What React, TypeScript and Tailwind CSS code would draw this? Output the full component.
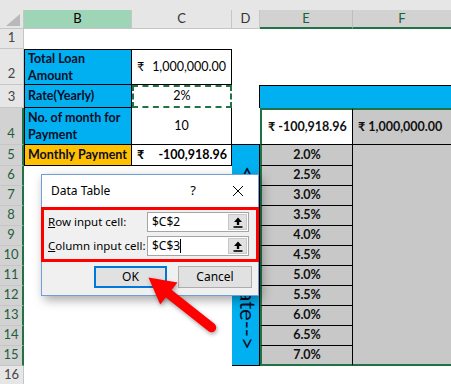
import React from "react";

const rates = ["2.0%", "2.5%", "3.0%", "3.5%", "4.0%", "4.5%", "5.0%", "5.5%", "6.0%", "6.5%", "7.0%"];

function RowHead({ n, selected }: { n: number; selected?: boolean }) {
  return (
    <div
      className={
        selected
          ? "flex items-end justify-center pb-px text-[13px] border-b border-[#c6c6c6] border-r-2 border-r-[#217346] bg-[#d2d2d2] text-[#1e5e3b]"
          : "flex items-end justify-center pb-px text-[13px] border-b border-[#c6c6c6] border-r border-r-[#c6c6c6] bg-[#e6e6e6] text-[#444]"
      }
    >
      {n}
    </div>
  );
}

function UploadIcon() {
  return (
    <svg width="10" height="11" viewBox="0 0 10 11">
      <path d="M5 0.5 L9 5 L6.2 5 L6.2 8 L3.8 8 L3.8 5 L1 5 Z" fill="#000" />
      <rect x="0.5" y="9.2" width="9" height="1.6" fill="#000" />
    </svg>
  );
}

function InputRow({ label, hot, value, caret }: { label: string; hot: string; value: string; caret?: boolean }) {
  return (
    <div className="flex items-center h-[20px]">
      <div className="w-[103px] pl-[4px] whitespace-nowrap text-[11.5px] text-black">
        <span className="underline">{hot}</span>
        {label}
      </div>
      <div className="flex items-center w-[102px] h-[20px] bg-white border border-[#a5a5a5]">
        <span className="pl-[4px] text-[12px] text-black leading-none">{value}</span>
        {caret && <span className="w-px h-[14px] bg-black" />}
        <div className="ml-auto mr-px flex items-center justify-center w-[19px] h-[16px] bg-[#e1e1e1] border border-[#c8c8c8]">
          <UploadIcon />
        </div>
      </div>
    </div>
  );
}

export default function App() {
  return (
    <div className="relative w-[451px] h-[384px] overflow-hidden bg-white font-['Lato',sans-serif] text-[12.5px]">
      <div className="h-[10px] bg-[#e6e6e6]" />
      <div className="grid grid-cols-[24px_108px_100px_28px_93px_98px] grid-rows-[19px_20px_36px_23px_37px_21px_repeat(11,20px)]">
        {/* column headers */}
        <div className="relative bg-[#e6e6e6] border-r border-b border-[#c6c6c6]">
          <svg className="absolute right-[3px] bottom-[2px]" width="14" height="12" viewBox="0 0 14 12">
            <polygon points="14,0 14,12 0,12" fill="#b9b9b9" />
          </svg>
        </div>
        <div className="flex items-center justify-center bg-[#9fd5b7] border-r border-b border-[#c6c6c6] text-[13px] text-black">B</div>
        <div className="flex items-center justify-center bg-[#e6e6e6] border-r border-b border-[#c6c6c6] text-[13px] text-[#333]">C</div>
        <div className="flex items-center justify-center bg-[#e6e6e6] border-r border-b border-[#c6c6c6] text-[13px] text-[#333]">D</div>
        <div className="flex items-center justify-center bg-[#d2d2d2] border-r border-[#bdbdbd] border-b-2 border-b-[#217346] text-[13px] text-[#1e5e3b]">E</div>
        <div className="flex items-center justify-center bg-[#d2d2d2] border-b-2 border-b-[#217346] text-[13px] text-[#1e5e3b]">F</div>

        {/* row 1 */}
        <RowHead n={1} />
        <div />
        <div />
        <div />
        <div />
        <div />

        {/* row 2 */}
        <RowHead n={2} />
        <div className="flex items-center px-[3px] bg-[#00b0f0] border border-black font-bold leading-[17px] text-[#0d0d26]">
          Total Loan Amount
        </div>
        <div className="flex items-center justify-between pl-[5px] pr-[5px] border-t border-r border-b border-black">
          <span>₹</span>
          <span>1,000,000.00</span>
        </div>
        <div />
        <div />
        <div />

        {/* row 3 */}
        <RowHead n={3} />
        <div className="flex items-center px-[3px] bg-[#00b0f0] border-x border-b border-black font-bold text-[#0d0d26]">
          Rate(Yearly)
        </div>
        <div className="flex items-center justify-center border-2 border-dashed border-[#217346]">2%</div>
        <div className="border-r border-black" />
        <div className="col-span-2 bg-[#00b0f0] border-t border-black" />

        {/* row 4 */}
        <RowHead n={4} selected />
        <div className="flex items-center px-[3px] bg-[#00b0f0] border-x border-b border-black font-bold leading-[17px] text-[#0d0d26]">
          No. of month for Payment
        </div>
        <div className="flex items-center justify-center border-r border-b border-black">10</div>
        <div className="border-b border-black" />
        <div className="flex items-center pl-[6px] whitespace-nowrap bg-white border-l-2 border-t-2 border-l-[#217346] border-t-[#217346] border-r border-b border-r-black border-b-black font-bold text-[#111]">
          ₹ -100,918.96
        </div>
        <div className="flex items-center pl-[5px] whitespace-nowrap bg-[#c8c8c8] border-t-2 border-t-[#217346] border-b border-b-black font-bold text-[#111]">
          ₹ 1,000,000.00
        </div>

        {/* row 5 */}
        <RowHead n={5} selected />
        <div className="flex items-center px-[3px] whitespace-nowrap bg-[#ffc000] border-x border-b border-black font-bold text-[#0d0d26]">
          Monthly Payment
        </div>
        <div className="flex items-center justify-between pl-[5px] pr-[4px] border-r border-b border-black font-bold">
          <span>₹</span>
          <span>-100,918.96</span>
        </div>
        <div className="row-span-11 flex justify-center pt-[6px] bg-[#00b0f0] border-r border-b border-black text-[22px] leading-none text-[#0d0d26] [writing-mode:vertical-rl]">
          {"<------------Rate-->"}
        </div>
        <div className="flex items-center justify-center bg-[#c8c8c8] border-l-2 border-l-[#217346] border-r border-b border-r-black border-b-black font-bold text-[#111]">
          {rates[0]}
        </div>
        <div className="row-span-11 bg-[#c8c8c8] border-b-2 border-[#217346]" />

        {/* rows 6-15 */}
        {rates.slice(1).map((r, i) => (
          <React.Fragment key={r}>
            <RowHead n={i + 6} selected />
            <div />
            <div />
            <div
              className={
                i === 9
                  ? "flex items-center justify-center bg-[#c8c8c8] border-l-2 border-b-2 border-l-[#217346] border-b-[#217346] border-r border-r-black font-bold text-[#111]"
                  : "flex items-center justify-center bg-[#c8c8c8] border-l-2 border-l-[#217346] border-r border-b border-r-black border-b-black font-bold text-[#111]"
              }
            >
              {r}
            </div>
          </React.Fragment>
        ))}

        {/* row 16 */}
        <RowHead n={16} />
        <div />
        <div />
        <div />
        <div />
        <div />
      </div>

      {/* Data Table dialog */}
      <div className="absolute left-[41px] top-[174px] w-[218px] h-[122px] flex flex-col bg-[#f0f0f0] border border-[#6f9fd6] shadow-[3px_4px_10px_rgba(0,0,0,0.35)] font-['Noto_Sans',sans-serif] text-black">
        <div className="flex items-center h-[32px] bg-white text-[12px]">
          <span className="flex-1 pl-[9px]">Data Table</span>
          <span className="mr-[36px] text-[13px]">?</span>
          <svg className="mr-[14px]" width="12" height="12" viewBox="0 0 12 12">
            <path d="M1 1 L11 11 M11 1 L1 11" stroke="#000" strokeWidth="1" />
          </svg>
        </div>
        <div className="-mx-px flex flex-col gap-[4px] h-[55px] pt-[2px] border-[3px] border-[#ff0000]">
          <InputRow hot="R" label="ow input cell:" value="$C$2" />
          <InputRow hot="C" label="olumn input cell:" value="$C$3" caret />
        </div>
        <div className="flex gap-[11px] pl-[52px] pt-[4px]">
          <div className="flex items-center justify-center w-[73px] h-[22px] bg-[#e1e1e1] border-2 border-[#0078d7] text-[12px]">
            OK
          </div>
          <div className="flex items-center justify-center w-[74px] h-[22px] bg-[#e1e1e1] border border-[#adadad] text-[12px]">
            Cancel
          </div>
        </div>
      </div>

      {/* red arrow */}
      <svg
        className="absolute left-[140px] top-[270px] drop-shadow-[1px_2px_2px_rgba(0,0,0,0.35)]"
        width="85"
        height="70"
        viewBox="0 0 85 70"
      >
        <line x1="26" y1="21.5" x2="71.5" y2="57.5" stroke="#ff0000" strokeWidth="9.5" strokeLinecap="round" />
        <polygon points="8.5,7.5 37.5,12.6 20.2,34.6" fill="#ff0000" />
      </svg>
    </div>
  );
}
